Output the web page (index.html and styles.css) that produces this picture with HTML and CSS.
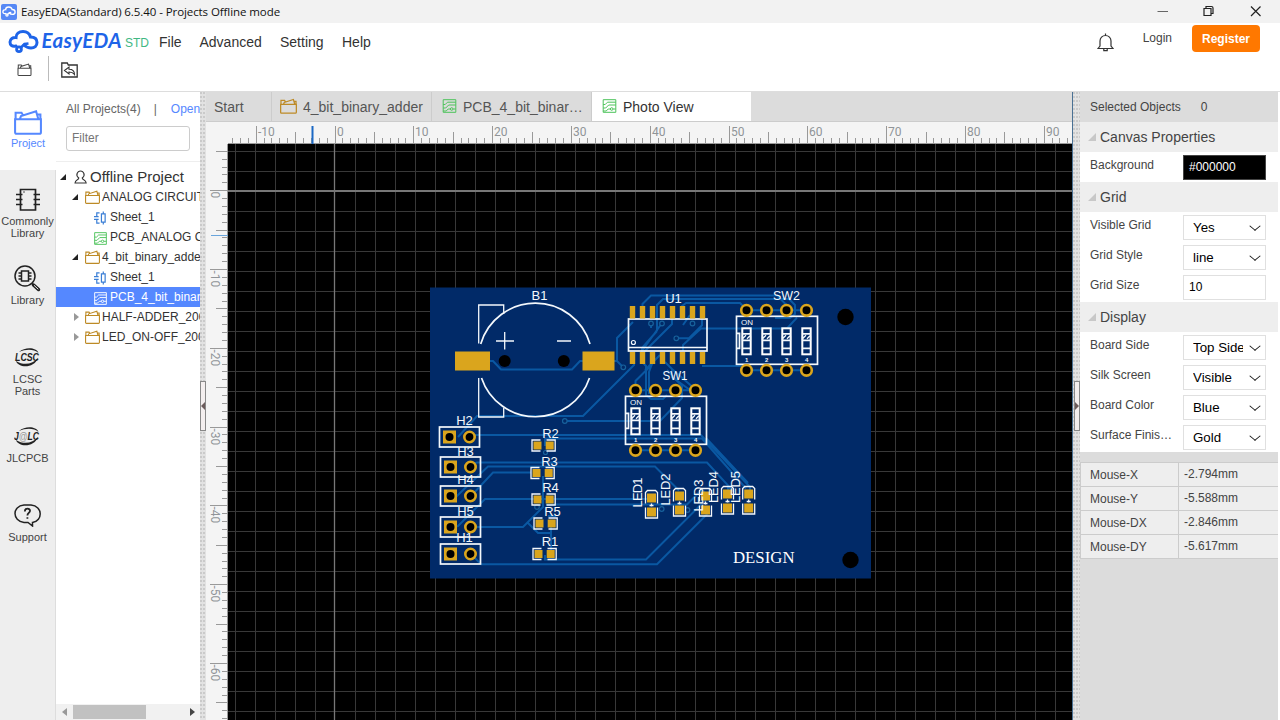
FILE: index.html
```html
<!DOCTYPE html>
<html lang="en">
<head>
<meta charset="utf-8">
<title>EasyEDA(Standard) 6.5.40 - Projects Offline mode</title>
<link rel="stylesheet" href="styles.css">
</head>
<body>
<svg class="defs" width="0" height="0">
  <symbol id="folder" viewBox="0 0 26 24"><path d="M1.500 9V3.500H7l1.500 2.500M5.500 9l1-2.500L20.500 2l2 7M21.500 5h3v4M1 9.500h24v12q0 1.500-1.500 1.500h-21Q1 23 1 21.500z" fill="none" stroke="currentColor" stroke-width="1.900"/></symbol>
  <symbol id="pcb" viewBox="0 0 14 14"><path d="M.7.7h12.600v12.600H.7zM.7 5.500h2L5 3.200h8.300M.7 9h2.500l3-3h7M.7 12h3l2-2h2M10.700 10h2.500" fill="none" stroke="currentColor" stroke-width="1"/><circle cx="9.200" cy="10" r="1.300" fill="none" stroke="currentColor"/></symbol>
  <symbol id="sheet" viewBox="0 0 14 14"><path d="M8 2.500h4v9H8zM10 0v2.500M10 11.500V14M6 1.500H3v4M0 5.500h5M0 8.500h5M3 8.500v4h3" fill="none" stroke="currentColor" stroke-width="1.300"/></symbol>
  <symbol id="cloud" viewBox="0 0 31 24"><path d="M8 16.500C4 17.500 2 15.500 2 12.500c0-3 3-5 6-4.500C8 4.500 11 2 15 2c4 0 6.500 2 7.500 5.500 4 0 6.500 2 6.500 5.500 0 3.500-2.500 5.500-6 5.500-3 0-5-1-7-3" fill="none" stroke="currentColor" stroke-width="3" stroke-linecap="round"/><path d="M12 19l4.500-4.500 4-.5" stroke="currentColor" stroke-width="2.500" fill="none"/><circle cx="11" cy="19.800" r="2.400" fill="none" stroke="currentColor" stroke-width="2.800"/></symbol>
</svg>

<header class="titlebar">
  <span class="appicon"><svg width="14" height="11"><use href="#cloud"/></svg></span>
  <span class="apptitle">EasyEDA(Standard) 6.5.40 - Projects Offline mode</span>
  <svg class="winbtns" width="110" height="23" fill="none" stroke="#222"><path d="M6.500 11.500h10.500" stroke="#666"/><path d="M53 8.500h7v7h-7zM55 8.500v-2h5.500q1.500 0 1.500 1.500v5.500h-2" stroke-width="1.200"/><path d="M100 6.500l9.500 9.500M109.500 6.500l-9.500 9.500" stroke-width="1.200"/></svg>
</header>

<div class="header">
  <div class="menurow">
    <svg class="logo" width="116" height="32"><svg x="0" y="4.500" width="31" height="24" class="blue"><use href="#cloud"/></svg><text x="33.500" y="22.500" textLength="80" lengthAdjust="spacing">EasyEDA</text></svg>
    <span class="std">STD</span>
    <span class="menu m1">File</span><span class="menu m2">Advanced</span><span class="menu m3">Setting</span><span class="menu">Help</span>
    <div class="account">
      <svg width="17" height="19" viewBox="0 0 17 19" fill="none" stroke="#333" stroke-width="1.200"><path d="M1 15.500l2-2.500V8c0-3 2.300-5.500 5.500-5.500S14 5 14 8v5l2 2.500zM8.500.5v2M6.800 16v1.700h3.400V16"/></svg>
      <span class="login">Login</span>
      <span class="register">Register</span>
    </div>
  </div>
  <div class="tools">
    <svg width="15" height="13" class="gray"><use href="#folder"/></svg>
    <i></i>
    <svg width="17" height="16" viewBox="0 0 17 16" fill="none" stroke="#333" stroke-width="1.300"><path d="M.8 1h5.500l1 2h8.900v12H.8z"/><path d="M3.500 8.500L8 5v2.200c4 0 5.500 2 5.500 5.300C12 10.500 11 10 8 10v2z" stroke-width="1.100"/></svg>
  </div>
</div>

<main class="body">
  <nav class="nav">
    <div class="item active"><svg width="28" height="26"><use href="#folder"/></svg><span>Project</span></div>
    <div class="item n2"><svg width="26" height="24" viewBox="0 0 26 24" fill="none" stroke="#222" stroke-width="1.700"><path d="M5.500 1.500h15v20.500h-15zM1 6.500h6.500M1 11.500h6.500M1 16.500h6.500M18.500 6.500H25M18.500 11.500H25M18.500 16.500H25"/><path d="M8.500 4h1"/></svg><span>Commonly<br>Library</span></div>
    <div class="item n3"><svg width="27" height="27" viewBox="0 0 27 27" fill="none" stroke="#222" stroke-width="1.500"><circle cx="11" cy="11" r="10"/><path d="M7.500 6h7v10h-7zM4.500 8h3M4.500 11h3M4.500 14h3M14.500 8h3M14.500 11h3M14.500 14h3M18 18.500l6.500 6" /><path d="M19.500 20l5 4.500" stroke-width="3.500" stroke-linecap="round"/><path d="M20 20.300l4.300 4" stroke="#eee" stroke-width="1"/></svg><span>Library</span></div>
    <div class="item n4"><svg width="27" height="22" viewBox="0 0 27 22"><path d="M5 5C11 0 22 0 24.500 6 20 2 12 2 5 5zM2 14c2 7 18 8 22-3-5 6-14 8-22 3z" fill="#222"/><text x="1" y="13.500" textLength="24" lengthAdjust="spacingAndGlyphs">LCSC</text></svg><span>LCSC<br>Parts</span></div>
    <div class="item n5"><svg width="27" height="22" viewBox="0 0 27 22"><path d="M5 5C11 0 22 0 24.500 6 20 2 12 2 5 5zM2 14c2 7 18 8 22-3-5 6-14 8-22 3z" fill="#222"/><text x="0" y="13.500" textLength="25" lengthAdjust="spacingAndGlyphs">J<tspan class="at">@</tspan>LC</text></svg><span>JLCPCB</span></div>
    <div class="item n6"><svg width="27" height="23" viewBox="0 0 27 23" fill="none" stroke="#222" stroke-width="1.500"><path d="M10 1h7c12 1 12 16 1.500 17.500V22L14 18.500h-4C-2 17-2 2 10 1z"/><path d="M10.800 7.500c0-4 5.500-3.500 5.200-.5-.2 2-2.600 2-2.600 4.500M13.400 13.200v1.500" stroke-width="1.800"/></svg><span>Support</span></div>
  </nav>

  <aside class="projects">
    <div class="ptop">
      <div class="pline"><span>All Projects(4)</span><span class="bar">|</span><a>Open</a></div>
      <div class="filter">Filter</div>
    </div>
    <div class="tree">
      <div class="row root"><b class="open"></b><svg width="13" height="14" viewBox="0 0 13 14" fill="none" stroke="#333" stroke-width="1.100"><path d="M4.800 8C1 5.500 3.500 1 6.500 1s5.500 4.500 1.700 7c0 2 3.800 1.500 4 5H1c.2-3.500 3.800-3 3.800-5z"/></svg>Offline Project</div>
      <div class="row l1"><b class="open"></b><svg class="gold" width="15" height="14"><use href="#folder"/></svg>ANALOG CIRCUITS</div>
      <div class="row l2"><svg class="sky" width="13" height="14"><use href="#sheet"/></svg>Sheet_1</div>
      <div class="row l2"><svg class="green" width="13" height="13"><use href="#pcb"/></svg>PCB_ANALOG CIRCUITS</div>
      <div class="row l1"><b class="open"></b><svg class="gold" width="15" height="14"><use href="#folder"/></svg>4_bit_binary_adder</div>
      <div class="row l2"><svg class="sky" width="13" height="14"><use href="#sheet"/></svg>Sheet_1</div>
      <div class="row l2 sel"><svg width="13" height="13"><use href="#pcb"/></svg>PCB_4_bit_binary_adder</div>
      <div class="row l1"><b></b><svg class="gold" width="15" height="14"><use href="#folder"/></svg>HALF-ADDER_2000</div>
      <div class="row l1"><b></b><svg class="gold" width="15" height="14"><use href="#folder"/></svg>LED_ON-OFF_2000</div>
    </div>
    <div class="scroll"><i class="la"></i><i class="thumb"></i><i class="ra"></i></div>
  </aside>

  <div class="split"><div class="handle"><i></i></div></div>

  <section class="center">
    <div class="tabs">
      <div class="tab start">Start</div>
      <div class="tab"><svg class="gold" width="17" height="16"><use href="#folder"/></svg><span>4_bit_binary_adder</span></div>
      <div class="tab p"><svg class="green" width="15" height="14"><use href="#pcb"/></svg><span>PCB_4_bit_binar…</span></div>
      <div class="tab p on"><svg class="green" width="15" height="14"><use href="#pcb"/></svg><span>Photo View</span></div>
    </div>
    <svg id="view" width="866" height="598" viewBox="206 122 866 598">
      <defs>
        <g id="hdr"><rect x="-10" y="-10" width="40" height="20" class="silk"/><rect x="-6.500" y="-6.500" width="13" height="13" class="gp"/><circle r="4" fill="#000"/><circle cx="20" r="5.200" class="ring"/></g>
        <g id="res"><path d="M3-5.500h-8.500v11H3M9-5.500h8.700v11H9" class="silk thin"/><rect x="-4" y="-4" width="8" height="8" class="gp"/><rect x="8.200" y="-4" width="8" height="8" class="gp"/></g>
        <g id="led"><path d="M-6-1.500v-11l2-2h8l2 2v11M-6 2.500v10.500H6V2.500M-2 .5h4M0-1.500v3" class="silk thin"/><rect x="-4.500" y="-11.500" width="9" height="9" class="gp"/><rect x="-4.500" y="2.500" width="9" height="9" class="gp"/></g>
        <g id="sw1"><rect x="-4.200" y="-12" width="8.400" height="26" fill="#012a68" stroke="#fff" stroke-width="2"/><path d="M-4-6.500h8M-4 0h8M-4 8h8" class="silk"/><path d="M-3.500-2l3-3M.5-1.500l3-3M-4-4v4M4-4v4" class="silk thin"/></g>
        <g id="dip">
          <path d="M10-30h60M10 30h60" class="tr"/>
          <rect x="0" y="-24" width="81" height="48" class="silk"/><path d="M0-7h3v15H0" class="silk"/>
          <text x="4.500" y="-15" class="st on">ON</text>
          <use href="#sw1" x="10" y="0"/><use href="#sw1" x="30" y="0"/><use href="#sw1" x="50" y="0"/><use href="#sw1" x="70" y="0"/>
          <g class="st tiny"><text x="8.500" y="21.500">1</text><text x="28.500" y="21.500">2</text><text x="48.500" y="21.500">3</text><text x="68.500" y="21.500">4</text></g>
          <g class="ring"><circle cx="10" cy="-30" r="5.300"/><circle cx="30" cy="-30" r="5.300"/><circle cx="50" cy="-30" r="5.300"/><circle cx="70" cy="-30" r="5.300"/><circle cx="10" cy="30" r="5.300"/><circle cx="30" cy="30" r="5.300"/><circle cx="50" cy="30" r="5.300"/><circle cx="70" cy="30" r="5.300"/></g>
        </g>
      </defs>
      <rect x="206" y="122" width="866" height="598" fill="#f4f4f4"/>
      <rect x="228" y="144" width="844" height="576" fill="#000"/>
      <g id="grid"></g>
      <g id="ruler"></g>
      <path d="M312.500 126v18" stroke="#1b68c4" stroke-width="2"/><path d="M211 235.500h17" stroke="#69a5dc"/>

      <rect x="430" y="287.500" width="441" height="291" fill="#012a68"/>
      <g class="tr">
        <path d="M490 361h3l8 8.500h71l8-8.500h3M614 361h3l6 6M617 361v-23l16-16M634 362v3l-51 51H477l-19 21M565 421h84M647 421h13l22-23v-12l-15-16"/>
        <path d="M642.500 308v-4l8.500-8.500h126l10 10M657 331v-26l6-6h126l6 6v9l-5 4h-15M682 310v-4l4-3h54l6 6M676 338.300h13l13-13v-8M683 351v-6l18-16.500h86l10-11M702 366h44M672 312v12l-30 30M657 331l-15 17v15M662 323l-20 28M651 323v5"/>
        <path d="M635.500 390v-9l17-17M642 362l4 4v29l5 4h12l4-4M645 370l15-15M652 364l-3 8v22M665 362l7 7v8l18 13M672 369l23 20M683 325l7-10"/>
        <path d="M470 436l4-1h227l49 52v10M545 446v-7.500h157l44 50M473 464l4-1.500h230l27 29.500M455 498l5-5 28-26.500h167l24 24M471 496l22-23.500h38M449 528l9-2 27-27h166M546 504.500h141l15-15 4 4M470 527h53l20-20v-31M528 523l10 10h13M551 524v33M545 555v4.500h101l61-61M471 554l10 10.300h176l52-52M548 516h8M706 438l42 45M728 494v-7"/>
      </g>
      <g class="via"><circle cx="623.300" cy="367.300" r="2.300"/><circle cx="564.800" cy="421" r="2.300"/><circle cx="651" cy="323.500" r="2.300"/><circle cx="662" cy="323.500" r="2.300"/><circle cx="692.500" cy="323.500" r="2.300"/><circle cx="676.300" cy="338.300" r="2.300"/><circle cx="537" cy="507" r="2.300"/><circle cx="545.500" cy="452.500" r="2"/><circle cx="661.700" cy="509" r="2.300"/><circle cx="687.500" cy="510" r="2.300"/></g>

      <g class="silk">
        <path d="M478.700 343.500V305h25v9M478.700 378v39h25v-9" stroke-width="1.300"/>
        <path d="M480.700 344A57 57 0 0 1 590 344M481.500 378A57 57 0 0 0 589.500 378"/>
        <path d="M496 341h18M504.700 332v17.500M557 341h14" stroke-width="1.300"/>
        <rect x="628.500" y="319" width="78.500" height="32"/><path d="M628 347.500h79"/><circle cx="633.400" cy="342.500" r="2" stroke-width="1.200"/>
      </g>
      <g fill="#daa51d"><rect x="455" y="351.500" width="35" height="19"/><rect x="582.500" y="351.500" width="32" height="19"/></g>
      <path d="M632.500 306v12.500M642.500 306v12.500M652.500 306v12.500M662.500 306v12.500M672.500 306v12.500M682.500 306v12.500M692.500 306v12.500M702.500 306v12.500M632.500 352v12M642.500 352v12M652.500 352v12M662.500 352v12M672.500 352v12M682.500 352v12M692.500 352v12M702.500 352v12" stroke="#daa51d" stroke-width="5.400"/>
      <g fill="#000"><circle cx="504.700" cy="361" r="6"/><circle cx="563.800" cy="361" r="6"/><circle cx="845.500" cy="317" r="8.200"/><circle cx="850.500" cy="560" r="8.200"/></g>
      <use href="#dip" x="736.500" y="340.300"/><use href="#dip" x="625.500" y="420.300"/>
      <use href="#hdr" x="449.500" y="437"/><use href="#hdr" x="450.500" y="467"/><use href="#hdr" x="450.500" y="496"/><use href="#hdr" x="450.500" y="527"/><use href="#hdr" x="450.500" y="554"/>
      <use href="#res" x="537.500" y="445.500"/><use href="#res" x="536.500" y="473"/><use href="#res" x="537.500" y="499.500"/><use href="#res" x="539.500" y="523.500"/><use href="#res" x="538.500" y="554"/>
      <use href="#led" x="651.500" y="505"/><use href="#led" x="679.500" y="503"/><use href="#led" x="705.500" y="503"/><use href="#led" x="727.500" y="501"/><use href="#led" x="748.700" y="501"/>
      <g class="st mid">
        <text x="539.500" y="300">B1</text><text x="673.500" y="303">U1</text><text x="786.500" y="300" textLength="27" lengthAdjust="spacingAndGlyphs">SW2</text><text x="675" y="380" textLength="25" lengthAdjust="spacingAndGlyphs">SW1</text>
        <text x="464.500" y="425">H2</text><text x="465.500" y="455.500">H3</text><text x="465.500" y="484">H4</text><text x="465.500" y="515.500">H5</text><text x="464.500" y="542">H1</text>
        <text x="550.500" y="437.500">R2</text><text x="549.500" y="465.500">R3</text><text x="550.500" y="491.500">R4</text><text x="552.500" y="515.500">R5</text><text x="550" y="546">R1</text>
        <text transform="translate(642 492.500) rotate(-90)" textLength="30">LED1</text><text transform="translate(670 489.500) rotate(-90)" textLength="32">LED2</text><text transform="translate(703 495.500) rotate(-90)" textLength="32">LED3</text><text transform="translate(718 487) rotate(-90)" textLength="32">LED4</text><text transform="translate(739.500 487) rotate(-90)" textLength="32">LED5</text>
      </g>
      <text x="733" y="563" class="design" textLength="61.500" lengthAdjust="spacingAndGlyphs">DESIGN</text>
    </svg>
  </section>

  <div class="split right"><div class="handle"><i></i></div></div>

  <aside class="props">
    <div class="selobj"><span>Selected Objects</span><span>0</span></div>
    <div class="group"><i></i>Canvas Properties</div>
    <div class="prop"><label>Background</label><div class="field black">#000000</div></div>
    <div class="group"><i></i>Grid</div>
    <div class="prop"><label>Visible Grid</label><div class="field pick"><span>Yes</span></div></div>
    <div class="prop"><label>Grid Style</label><div class="field pick"><span>line</span></div></div>
    <div class="prop"><label>Grid Size</label><div class="field">10</div></div>
    <div class="group"><i></i>Display</div>
    <div class="prop"><label>Board Side</label><div class="field pick"><span>Top Side</span></div></div>
    <div class="prop"><label>Silk Screen</label><div class="field pick"><span>Visible</span></div></div>
    <div class="prop"><label>Board Color</label><div class="field pick"><span>Blue</span></div></div>
    <div class="prop"><label>Surface Finis…</label><div class="field pick"><span>Gold</span></div></div>
    <div class="mouse">
      <div><span>Mouse-X</span><span>-2.794mm</span></div>
      <div><span>Mouse-Y</span><span>-5.588mm</span></div>
      <div><span>Mouse-DX</span><span>-2.846mm</span></div>
      <div><span>Mouse-DY</span><span>-5.617mm</span></div>
    </div>
  </aside>
</main>
<script src="script.js"></script>
</body>
</html>
```
FILE: styles.css
```css
* { box-sizing: border-box; }
body { margin: 0; width: 1280px; height: 720px; overflow: hidden; display: flex; flex-direction: column; background: #fff; color: #444; font: 12px "Liberation Sans", Arial, sans-serif; white-space: nowrap; }
svg { display: block; flex: none; }
.defs { position: absolute; }
.blue { color: #1e64e8; }
.gold { color: #bd8a26; }
.green { color: #4cc35a; }
.sky { color: #3b7fd6; }
.gray { color: #444; }

.titlebar { height: 23px; flex: none; background: #f2f2f2; display: flex; align-items: center; color: #111; }
.appicon { width: 16px; height: 16px; margin-left: 1px; border-radius: 2px; background: #5588f5; color: #fff; display: grid; place-items: center; }
.apptitle { font: 11.5px "Open Sans", "Noto Sans", sans-serif; margin-left: 4px; letter-spacing: -0.08px; }
.winbtns { margin-left: auto; margin-right: 19px; overflow: visible; }

.header { height: 69px; flex: none; border-bottom: 1px solid #ddd; }
.menurow { height: 33px; display: flex; align-items: center; padding-left: 8px; }
.logo { margin-top: 2px; }
.logo text { font: italic bold 20.5px Lato, sans-serif; fill: #1e64e8; }
.std { font-size: 12px; color: #41b883; width: 35px; margin-top: 6px; letter-spacing: -0.1px; padding-left: 1px; }
.menu { font-size: 14px; margin-top: 5px; color: #333; }
.m1 { width: 40.500px; }
.m2 { width: 80.500px; }
.m3 { width: 62px; }
.account { margin-left: auto; padding-right: 20px; display: flex; align-items: flex-start; height: 30px; }
.account svg { margin: 8px 1px 0 0; }
.login { margin: 6px 20px 0 28px; }
.register { width: 68px; height: 27px; margin-top: 0; border-radius: 4px; background: #ff7800; color: #fff; font-weight: bold; text-align: center; line-height: 28px; }
.tools { display: flex; align-items: center; height: 25px; padding-left: 17px; }
.tools i { width: 1px; height: 25px; background: #bbb; margin: 0 12px 0 16px; }
.tools svg { margin-top: 2px; }

.body { flex: 1; display: flex; min-height: 0; }
.nav { width: 56px; background: #eee; border-right: 1px solid #ddd; font-size: 11px; line-height: 12px; text-align: center; }
.item { display: flex; flex-direction: column; align-items: center; }
.item.active { width: 56px; height: 78px; background: #fff; color: #5588ff; padding-top: 17px; gap: 2px; }
.n2 { padding-top: 18px; gap: 3px; }
.n3 { padding-top: 26px; gap: 2px; }
.n4 { padding-top: 41px; gap: 4px; }
.n5 { padding-top: 29px; gap: 4px; }
.n6 { padding-top: 40px; gap: 4px; }
.nav text { font: italic bold 10px "Liberation Sans", sans-serif; fill: #222; }
.nav .at { fill: #999; font-weight: normal; }

.projects { width: 144px; display: flex; flex-direction: column; overflow: hidden; flex: none; }
.ptop { height: 70px; flex: none; border-bottom: 1px solid #eee; padding: 9px 0 0 10px; }
.pline { display: flex; color: #666; line-height: 16px; }
.bar { margin: 0 14px 0 13px; }
.pline a { color: #5588ff; }
.filter { width: 124px; height: 25px; border: 1px solid #ccc; border-radius: 3px; margin-top: 9px; padding-left: 5px; line-height: 23px; color: #757575; }
.tree { flex: 1; padding-top: 5px; color: #333; }
.row { height: 20px; display: flex; align-items: center; line-height: 20px; }
.row b { width: 0; height: 0; border: 4px solid transparent; border-left: 5px solid #999; border-right: 0; margin-left: 2px; margin-right: 5px; }
.row b.open { border: 0; border-left: 6px solid transparent; border-bottom: 6px solid #222; margin-left: 0; margin-right: 6px; }
.root { padding-left: 4px; font-size: 15px; }
.root svg { margin: 0 3px 0 2px; }
.root b.open { margin-right: 6px; }
.l1 { padding-left: 16px; }
.l1 svg { margin: 0 2px 0 1px; }
.l2 { padding-left: 38px; }
.l2 svg { margin-right: 3px; margin-top: 2px; }
.sel { background: #5588ff; color: #fff; }
.scroll { height: 16px; background: #f1f1f1; display: flex; align-items: center; padding-left: 6px; }
.scroll i { display: block; border: 4px solid transparent; }
.scroll .la { border-right: 5px solid #999; border-left: 0; }
.scroll .thumb { width: 73px; height: 14px; background: #c1c1c1; border: 0; margin: 0 44px 0 6px; }
.scroll .ra { border-left: 5px solid #444; border-right: 0; }

.split { width: 6px; flex: none; background: radial-gradient(circle at 1px 1px, #cacaca 0.700px, transparent 1px) 0 0 / 3px 4px #e2e2e2; padding-top: 289px; }
.handle { height: 50px; border: 1px solid #888; background: #f3eeee; display: flex; align-items: center; justify-content: flex-end; }
.handle i { border: 4px solid transparent; border-right-color: #6b5b5b; border-left: 0; }
.right { width: 8px; border-left: 1px solid #4a7194; }
.right .handle { margin-left: 1px; justify-content: flex-start; }
.right .handle i { border: 4px solid transparent; border-left-color: #6b5b5b; border-right: 0; }

.center { width: 866px; flex: none; }
.tabs { height: 30px; background: #dcdcdc; display: flex; border-bottom: 1px solid #ccc; font-size: 14px; color: #555; }
.tab { width: 160px; display: flex; align-items: center; border-right: 1px solid #ccc; padding-left: 8px; padding-top: 1px; }
.tab svg { margin: -3px 6px 0 0; }
.tab.start { width: 66px; }
.tab.p { padding-left: 10px; }
.tab.p svg { margin-right: 6px; }
.tab.on { width: 159px; background: #fff; color: #333; border: 0; }

.grid { stroke: #383838; fill: none; }
.axis { stroke: #777; fill: none; }
.tick { stroke: #999; fill: none; }
.num { font: 12px Roboto, sans-serif; fill: #909498; }
.tr { fill: none; stroke: #0a58a2; stroke-width: 2; }
.via { fill: #012a68; stroke: #18629c; stroke-width: 1.200; }
.silk { fill: none; stroke: #f4f8fc; stroke-width: 1.700; }
.thin { stroke-width: 1.300; }
.gp { fill: #daa51d; }
.ring { fill: #000; stroke: #daa51d; stroke-width: 2.600; }
.st { font: 13px "Liberation Sans", sans-serif; fill: #f4f8fc; }
.mid { text-anchor: middle; }
.st.on { font-size: 8px; }
.tiny text { font-size: 6px; font-weight: bold; }
.design { font: 17px "Liberation Serif", serif; fill: #fff; }

.props { width: 198px; flex: none; background: #dcdcdc; }
.selobj { height: 30px; padding: 0 0 1px 10px; display: flex; align-items: center; gap: 20px; }
.group { height: 30px; background: #eee; font-size: 14px; display: flex; align-items: center; padding-left: 8px; }
.group i { border-left: 8px solid transparent; border-bottom: 8px solid #c8c8c8; margin-right: 4px; }
.prop { height: 30px; background: #fff; display: flex; padding-left: 10px; }
.prop label { width: 93px; line-height: 27px; }
.field { width: 83px; height: 25px; margin-top: 3px; border: 1px solid #e0e0e0; line-height: 23px; padding-left: 5px; color: #000; }
.field.black { background: #000; color: #fff; border-color: #444; }
.pick { font-size: 13.300px; padding: 0 5px 0 9px; display: flex; justify-content: space-between; }
.pick span { max-width: 50px; overflow: hidden; }
.pick::after { content: ""; width: 7px; height: 7px; border: solid #111; border-width: 0 1.800px 1.800px 0; transform: scaleY(0.850) rotate(45deg); margin: 6px 1px 0 0; }
.mouse { margin-top: 10px; border-top: 1px solid #ccc; }
.mouse div { height: 24px; background: #eee; border-bottom: 1px solid #ccc; border-left: 1px solid #ccc; display: flex; line-height: 24px; }
.mouse span:first-child { width: 98px; padding-left: 9px; border-right: 1px solid #ccc; }
.mouse span:last-child { padding-left: 5px; line-height: 23px; }
```
FILE: script.js
```js
const X0 = 334.7, Y0 = 190.7, MM = 7.88;
let lines = "";
for (let x = 235.5; x < 1072; x += 20) if (x !== 335.5) lines += `M${x} 144V720`;
for (let y = 151.5; y < 720; y += 20) if (y !== 191.5) lines += `M228 ${y}H1072`;
document.getElementById("grid").innerHTML =
  `<path class="grid" d="${lines}"/><path class="axis" stroke-width="2" d="M228 191H1072"/><path class="axis" stroke-width="1.300" d="M334.500 144V720"/>`;

let ticks = "M228 143.5H1072M227.5 144V720", nums = "";
const len = (n, a, b, c) => (n % 10 === 0 ? a : n % 5 === 0 ? b : c);
for (let n = -13; n <= 93; n++) {
  const x = Math.floor(X0 + n * MM + 0.3) + 0.5;
  ticks += `M${x} 144v-${len(n, 18, 12, 6)}`;
  if (n % 10 === 0) nums += `<text class="num" x="${x + 1.5}" y="135.500">${n}</text>`;
}
for (let n = -5; n <= 67; n++) {
  const y = Math.floor(Y0 + n * MM) + 0.5;
  ticks += `M228 ${y}h-${len(n, 18, 12, 6)}`;
  if (n >= 0 && n % 10 === 0) nums += `<text class="num" transform="translate(211 ${y + 1}) rotate(90)">${n ? -n : 0}</text>`;
}
document.getElementById("ruler").innerHTML = `<path class="tick" d="${ticks}"/>${nums}`;
```
